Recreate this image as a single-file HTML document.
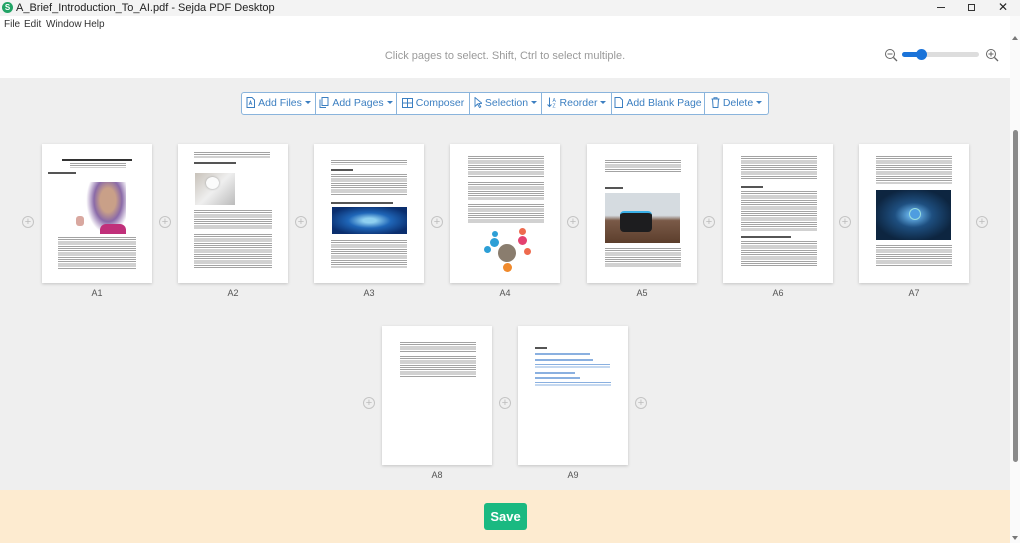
<!DOCTYPE html>
<html><head><meta charset="utf-8"><style>
*{margin:0;padding:0;box-sizing:border-box}
body{width:1020px;height:543px;overflow:hidden;font-family:"Liberation Sans",sans-serif;background:#efefef;position:relative}
.abs{position:absolute}
#title{left:0;top:0;width:1020px;height:16px;background:#f3f3f3;font-size:11px;color:#222}
#menu{left:0;top:16px;width:1010px;height:62px;background:#fff}
#menu span{position:absolute;top:3px;font-size:10px;color:#333}
.btn{position:absolute;top:92px;height:23px;border:1px solid #8ab4dc;border-left:none;background:#fff;color:#3c7fc1;font-size:10.5px;line-height:21px;text-align:center;white-space:nowrap}
.btn svg{vertical-align:-2px;margin-right:3px}
.caret{display:inline-block;border-left:3px solid transparent;border-right:3px solid transparent;border-top:3px solid #3c7fc1;margin-left:3px;vertical-align:2px}
.pg{position:absolute;width:110px;height:139px;background:#fff;box-shadow:0 1px 3px rgba(0,0,0,.18)}
.lbl{position:absolute;width:110px;text-align:center;font-size:9px;color:#555}
.plus{position:absolute;width:12px;height:12px;border:1px solid #c4c4c4;border-radius:50%;color:#bbb;font-size:11px;line-height:10px;text-align:center}
.t{position:absolute;background:repeating-linear-gradient(#666 0 1px,#fff 1px 2.2px);opacity:.6}
.h{position:absolute;height:2px;background:#555}
</style></head><body>
<div id="title" class="abs">
<div class="abs" style="left:2px;top:2px;width:11px;height:11px;border-radius:50%;background:#21a365;color:#fff;font-size:8px;line-height:11px;text-align:center;font-weight:bold">S</div>
<div class="abs" style="left:16px;top:2px">A_Brief_Introduction_To_AI.pdf - Sejda PDF Desktop</div>
<div class="abs" style="left:937px;top:7px;width:8px;height:1px;background:#333"></div>
<div class="abs" style="left:968px;top:4px;width:7px;height:7px;border:1px solid #333"></div>
<div class="abs" style="left:998px;top:0px;font-size:12px">✕</div>
</div>
<div id="menu" class="abs">
<span style="left:4px">File</span><span style="left:24px">Edit</span><span style="left:46px">Window</span><span style="left:84px">Help</span>
<div class="abs" style="left:0;top:34px;width:1010px;text-align:center;font-size:11px;color:#9a9a9a;padding-left:0">Click pages to select. Shift, Ctrl to select multiple.</div>
<svg class="abs" style="left:884px;top:32px" width="14" height="14"><circle cx="6" cy="6" r="4.5" fill="none" stroke="#666"/><line x1="3.5" y1="6" x2="8.5" y2="6" stroke="#666"/><line x1="9.5" y1="9.5" x2="13" y2="13" stroke="#666" stroke-width="1.3"/></svg>
<div class="abs" style="left:902px;top:36px;width:77px;height:5px;border-radius:3px;background:#ddd"></div>
<div class="abs" style="left:902px;top:36px;width:20px;height:5px;border-radius:3px;background:#1a73d9"></div>
<div class="abs" style="left:916px;top:33px;width:11px;height:11px;border-radius:50%;background:#1a73d9"></div>
<svg class="abs" style="left:985px;top:32px" width="14" height="14"><circle cx="6" cy="6" r="4.5" fill="none" stroke="#666"/><line x1="3.5" y1="6" x2="8.5" y2="6" stroke="#666"/><line x1="6" y1="3.5" x2="6" y2="8.5" stroke="#666"/><line x1="9.5" y1="9.5" x2="13" y2="13" stroke="#666" stroke-width="1.3"/></svg>
</div>
<div class="abs" style="left:1010px;top:16px;width:10px;height:527px;background:#fafafa"></div>
<div class="abs" style="left:1012px;top:36px;border-left:3px solid transparent;border-right:3px solid transparent;border-bottom:4px solid #777"></div>
<div class="abs" style="left:1013px;top:130px;width:5px;height:332px;border-radius:3px;background:#8a8a8a"></div>
<div class="abs" style="left:1012px;top:536px;border-left:3px solid transparent;border-right:3px solid transparent;border-top:4px solid #777"></div>
<div class="btn" style="left:241px;width:75px;border-left:1px solid #8ab4dc;border-radius:3px 0 0 3px"><svg width="9" height="11"><path d="M1 .5h5l2.5 2.5v7.5h-7.5z" fill="none" stroke="#3c7fc1"/><path d="M3 8l1.5-4 1.5 4M3.5 6.5h2" stroke="#3c7fc1" fill="none" stroke-width=".8"/></svg>Add Files<span class="caret"></span></div>
<div class="btn" style="left:316px;width:81px"><svg width="10" height="11"><rect x="3" y=".5" width="6" height="8" fill="none" stroke="#3c7fc1"/><path d="M1 2.5v8h6" fill="none" stroke="#3c7fc1"/></svg>Add Pages<span class="caret"></span></div>
<div class="btn" style="left:397px;width:73px"><svg width="11" height="10"><rect x=".5" y=".5" width="10" height="9" fill="none" stroke="#3c7fc1"/><path d="M5.5 .5v9M.5 5h10" stroke="#3c7fc1"/></svg>Composer</div>
<div class="btn" style="left:470px;width:72px"><svg width="8" height="11"><path d="M1 .5v9l2.5-2.5 2 3.5 1.3-.7-2-3.4h3.2z" fill="none" stroke="#3c7fc1" stroke-width=".9"/></svg>Selection<span class="caret"></span></div>
<div class="btn" style="left:542px;width:70px"><svg width="10" height="11"><path d="M2.5 .5v9M.5 7.5l2 2 2-2" fill="none" stroke="#3c7fc1"/><text x="5.5" y="5" font-size="5" fill="#3c7fc1">A</text><text x="5.5" y="10.5" font-size="5" fill="#3c7fc1">Z</text></svg>Reorder<span class="caret"></span></div>
<div class="btn" style="left:612px;width:93px"><svg width="9" height="11"><path d="M1 .5h5l2.5 2.5v7.5h-7.5z" fill="none" stroke="#3c7fc1"/></svg>Add Blank Page</div>
<div class="btn" style="left:705px;width:64px;border-radius:0 3px 3px 0"><svg width="9" height="11"><path d="M.5 2h8M3 2V.7h3V2M1.5 2l.6 8.5h4.8L7.5 2" fill="none" stroke="#3c7fc1"/></svg>Delete<span class="caret"></span></div>

<div class="pg" style="left:42px;top:144px">
 <div class="h" style="left:20px;top:15px;width:70px;background:#333"></div>
 <div class="t" style="left:28px;top:19px;width:56px;height:5px"></div>
 <div class="h" style="left:6px;top:28px;width:28px;height:1.5px"></div>
 <div class="abs" style="left:44px;top:38px;width:40px;height:52px;background:radial-gradient(ellipse at 55% 35%,#c9a088 0 25%,#8a6aa8 45%,#fff 70%)"></div>
 <div class="abs" style="left:58px;top:80px;width:26px;height:10px;background:#c0307a;border-radius:6px 6px 0 0"></div>
 <div class="abs" style="left:34px;top:72px;width:8px;height:10px;background:#d9a8a0;border-radius:3px"></div>
 <div class="t" style="left:16px;top:93px;width:78px;height:32px"></div>
</div>
<div class="pg" style="left:178px;top:144px">
 <div class="t" style="left:16px;top:8px;width:76px;height:6px"></div>
 <div class="h" style="left:16px;top:18px;width:42px;height:1.5px"></div>
 <div class="abs" style="left:17px;top:29px;width:40px;height:32px;background:linear-gradient(135deg,#c8c2ba,#efefef 50%,#bbb)"></div>
 <div class="abs" style="left:28px;top:33px;width:13px;height:12px;border-radius:50%;background:#fbfbfb;box-shadow:0 0 2px #999"></div>
 <div class="t" style="left:16px;top:66px;width:78px;height:20px"></div>
 <div class="t" style="left:16px;top:90px;width:78px;height:34px"></div>
</div>
<div class="pg" style="left:314px;top:144px">
 <div class="t" style="left:17px;top:16px;width:76px;height:5px"></div>
 <div class="h" style="left:17px;top:25px;width:22px;height:1.5px"></div>
 <div class="t" style="left:17px;top:30px;width:76px;height:22px"></div>
 <div class="h" style="left:17px;top:58px;width:62px;height:1.5px"></div>
 <div class="abs" style="left:18px;top:63px;width:75px;height:27px;background:radial-gradient(ellipse at 50% 50%,#8fd0f0 0 12%,#1f66b8 40%,#0a2e6e 80%)"></div>
 <div class="t" style="left:17px;top:96px;width:76px;height:28px"></div>
</div>
<div class="pg" style="left:450px;top:144px">
 <div class="t" style="left:18px;top:12px;width:76px;height:22px"></div>
 <div class="t" style="left:18px;top:38px;width:76px;height:18px"></div>
 <div class="t" style="left:18px;top:60px;width:76px;height:20px"></div>
 <div class="abs" style="left:48px;top:100px;width:18px;height:18px;border-radius:50%;background:#8a7d6e"></div>
 <div class="abs" style="left:40px;top:94px;width:9px;height:9px;border-radius:50%;background:#2d9fd6"></div>
 <div class="abs" style="left:34px;top:102px;width:7px;height:7px;border-radius:50%;background:#2d9fd6"></div>
 <div class="abs" style="left:68px;top:92px;width:9px;height:9px;border-radius:50%;background:#e44170"></div>
 <div class="abs" style="left:74px;top:104px;width:7px;height:7px;border-radius:50%;background:#ee6a4e"></div>
 <div class="abs" style="left:69px;top:84px;width:7px;height:7px;border-radius:50%;background:#ee6a4e"></div>
 <div class="abs" style="left:53px;top:119px;width:9px;height:9px;border-radius:50%;background:#f08a2c"></div>
 <div class="abs" style="left:42px;top:87px;width:6px;height:6px;border-radius:50%;background:#2d9fd6"></div>
</div>
<div class="pg" style="left:587px;top:144px">
 <div class="t" style="left:18px;top:16px;width:76px;height:12px"></div>
 <div class="h" style="left:18px;top:43px;width:18px;height:1.5px"></div>
 <div class="abs" style="left:18px;top:49px;width:75px;height:50px;background:linear-gradient(#d5dbe0 0 45%,#7a5a48 55%,#5c3e2c)"></div>
 <div class="abs" style="left:33px;top:67px;width:32px;height:21px;border-radius:4px;background:#1d1d1f;border-top:2px solid #3ab0e8"></div>
 <div class="t" style="left:18px;top:104px;width:76px;height:20px"></div>
</div>
<div class="pg" style="left:723px;top:144px">
 <div class="t" style="left:18px;top:12px;width:76px;height:24px"></div>
 <div class="h" style="left:18px;top:42px;width:22px;height:1.5px"></div>
 <div class="t" style="left:18px;top:47px;width:76px;height:40px"></div>
 <div class="h" style="left:18px;top:92px;width:50px;height:1.5px"></div>
 <div class="t" style="left:18px;top:97px;width:76px;height:26px"></div>
</div>
<div class="pg" style="left:859px;top:144px">
 <div class="t" style="left:17px;top:12px;width:76px;height:28px"></div>
 <div class="abs" style="left:17px;top:46px;width:75px;height:50px;background:radial-gradient(ellipse at 50% 50%,#5fa8e0 0 10%,#1e4f80 35%,#0d2540 75%)"></div>
 <div class="abs" style="left:51px;top:65px;width:10px;height:10px;border-radius:50%;background:#4e9de0;box-shadow:0 0 0 1px #9dd"></div>
 <div class="t" style="left:17px;top:101px;width:76px;height:22px"></div>
</div>
<div class="pg" style="left:382px;top:326px">
 <div class="t" style="left:18px;top:16px;width:76px;height:10px"></div>
 <div class="t" style="left:18px;top:30px;width:76px;height:22px"></div>
</div>
<div class="pg" style="left:518px;top:326px">
 <div class="h" style="left:17px;top:21px;width:12px;height:1.5px"></div>
 <div class="abs" style="left:17px;top:27px;width:55px;height:1.5px;background:#8ab0e0"></div>
 <div class="abs" style="left:17px;top:33px;width:58px;height:1.5px;background:#8ab0e0"></div>
 <div class="abs" style="left:17px;top:38px;width:75px;height:4px;background:repeating-linear-gradient(#8ab0e0 0 1px,#fff 1px 2.5px)"></div>
 <div class="abs" style="left:17px;top:46px;width:40px;height:1.5px;background:#8ab0e0"></div>
 <div class="abs" style="left:17px;top:51px;width:45px;height:1.5px;background:#8ab0e0"></div>
 <div class="abs" style="left:17px;top:56px;width:76px;height:4px;background:repeating-linear-gradient(#8ab0e0 0 1px,#fff 1px 2.5px)"></div>
</div>
<div class="lbl" style="left:42px;top:288px">A1</div>
<div class="lbl" style="left:178px;top:288px">A2</div>
<div class="lbl" style="left:314px;top:288px">A3</div>
<div class="lbl" style="left:450px;top:288px">A4</div>
<div class="lbl" style="left:587px;top:288px">A5</div>
<div class="lbl" style="left:723px;top:288px">A6</div>
<div class="lbl" style="left:859px;top:288px">A7</div>
<div class="lbl" style="left:382px;top:470px">A8</div>
<div class="lbl" style="left:518px;top:470px">A9</div>
<div class="plus" style="left:22px;top:216px">+</div>
<div class="plus" style="left:159px;top:216px">+</div>
<div class="plus" style="left:295px;top:216px">+</div>
<div class="plus" style="left:431px;top:216px">+</div>
<div class="plus" style="left:567px;top:216px">+</div>
<div class="plus" style="left:703px;top:216px">+</div>
<div class="plus" style="left:839px;top:216px">+</div>
<div class="plus" style="left:976px;top:216px">+</div>
<div class="plus" style="left:363px;top:397px">+</div>
<div class="plus" style="left:499px;top:397px">+</div>
<div class="plus" style="left:635px;top:397px">+</div>
<div class="abs" style="left:0;top:490px;width:1010px;height:53px;background:#fdebd0"></div>
<div class="abs" style="left:484px;top:503px;width:43px;height:27px;border-radius:3px;background:#1ab981;color:#fff;font-weight:bold;font-size:13px;line-height:27px;text-align:center">Save</div>
</body></html>
